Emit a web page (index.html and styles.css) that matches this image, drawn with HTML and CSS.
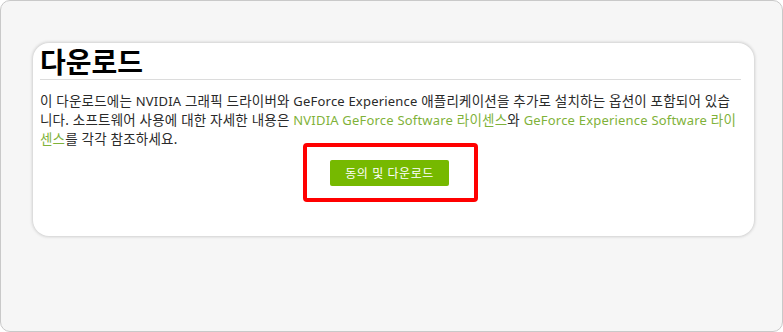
FILE: index.html
```html
<!DOCTYPE html>
<html lang="ko">
<head>
<meta charset="utf-8">
<link rel="stylesheet" href="styles.css">
</head>
<body>
<div class="frame">
  <div class="card">
    <h1 class="title">다운로드</h1>
    <p class="desc">이 다운로드에는 <span class="lat">NVIDIA</span> 그래픽 드라이버와 <span class="lat">GeForce Experience</span> 애플리케이션을 추가로 설치하는 옵션이 포함되어 있습니다. 소프트웨어 사용에 대한 자세한 내용은 <a class="lnk" href="#"><span class="lat">NVIDIA GeForce Software</span> 라이센스</a>와 <a class="lnk" href="#"><span class="lat">GeForce Experience Software</span> 라이센스</a>를 각각 참조하세요.</p>
    <div class="actions">
      <div class="highlight">
        <a class="btn" href="#">동의 및 다운로드</a>
      </div>
    </div>
  </div>
</div>
</body>
</html>
```
FILE: styles.css
```css
html, body {
  margin: 0;
  padding: 0;
  background: #ffffff;
}
body {
  font-family: "Noto Sans", "Noto Sans CJK KR", sans-serif;
}
.frame {
  box-sizing: border-box;
  width: 783px;
  height: 332px;
  background: #f6f6f6;
  border: 1px solid #c9c9c9;
  border-radius: 10px;
  padding: 42px 28px 0 32px;
}
.card {
  box-sizing: border-box;
  height: 193px;
  background: #ffffff;
  border-radius: 16px;
  box-shadow: 0 0 3px 1px #cfcfcf;
  padding: 0 13px 0 7px;
}
.title {
  margin: 0;
  padding-top: 1px;
  font-family: "Noto Sans CJK KR", sans-serif;
  font-size: 28px;
  font-weight: 700;
  line-height: 34px;
  color: #000;
  border-bottom: 1px solid #dcdcdc;
  padding-bottom: 1px;
}
.desc {
  margin: 12px 0 0 0;
  font-size: 13.5px;
  line-height: 19px;
  color: #2a2a2a;
  letter-spacing: 0.2px;
}
.lat {
  font-size: 13px;
  letter-spacing: 0.2px;
}
.lnk {
  color: #7fb23a;
  text-decoration: none;
}
.actions {
  display: flex;
  justify-content: center;
  margin-top: -6px;
}
.highlight {
  box-sizing: border-box;
  width: 175px;
  height: 59px;
  border: 4px solid #ff0000;
  border-radius: 4px;
  display: flex;
  align-items: center;
  justify-content: center;
  padding-right: 2px;
}
.btn {
  display: block;
  width: 119px;
  height: 26px;
  line-height: 26px;
  text-align: center;
  background: #76b900;
  color: #fff;
  font-size: 12px;
  letter-spacing: 0.5px;
  border-radius: 2px;
  text-decoration: none;
  font-family: "Noto Sans CJK KR", sans-serif;
}
```
